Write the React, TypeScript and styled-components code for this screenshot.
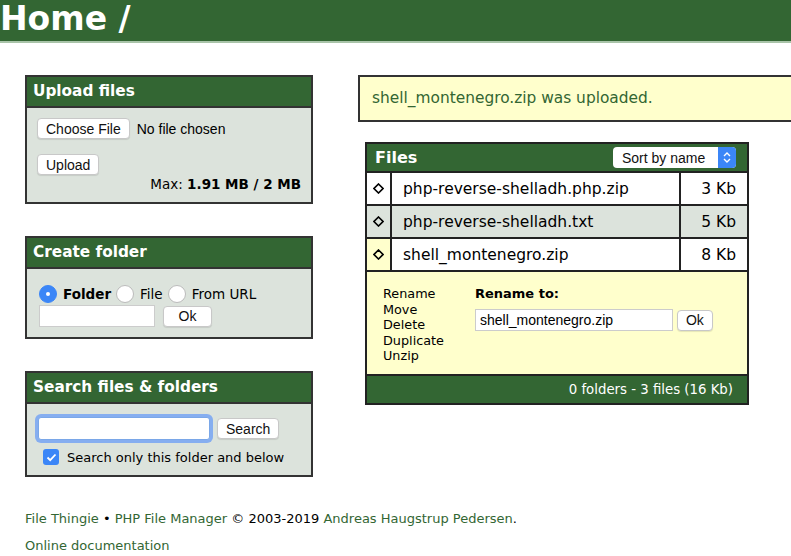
import React from "react";
import styled, { createGlobalStyle } from "styled-components";

const GlobalStyle = createGlobalStyle`
  body {
    margin: 0;
    background: #fff;
    font-family: "DejaVu Sans", Verdana, sans-serif;
    color: #000;
  }
`;

const GREEN = "#336633";
const PALE = "#dce3dc";
const YELLOW = "#ffffcc";
const BORDER = "#333";

const Header = styled.h1`
  margin: 0;
  height: 41px;
  background: ${GREEN};
  border-bottom: 2px solid #a9c4a9;
  color: #fff;
  font-size: 33px;
  font-weight: bold;
  line-height: 38px;
  padding-left: 0;
`;

const Main = styled.div`
  display: flex;
  align-items: flex-start;
  padding: 32px 0 0 25px;
  gap: 45px;
`;

const LeftCol = styled.div`
  display: flex;
  flex-direction: column;
  gap: 32px;
  width: 288px;
  flex-shrink: 0;
`;

const RightCol = styled.div`
  flex: 1;
  margin-right: -20px;
`;

const Box = styled.div`
  border: 2px solid ${BORDER};
  background: ${PALE};
`;

const BoxTitle = styled.h3`
  margin: 0;
  background: ${GREEN};
  color: #fff;
  font-size: 15.3px;
  font-weight: bold;
  padding: 5px 6px 5px;
  line-height: 19px;
  border-bottom: 2px solid ${BORDER};
`;

const BoxBody = styled.div<{ $pad?: string }>`
  padding: ${(p) => p.$pad || "10px 10px 8px"};
  font-size: 13px;
`;

const Btn = styled.button`
  font-family: "Liberation Sans", Arial, sans-serif;
  font-size: 14px;
  background: #fff;
  border: 1px solid #c8c8c8;
  border-radius: 4px;
  padding: 0 8px;
  height: 21px;
  color: #111;
  box-shadow: 0 1px 1px rgba(0, 0, 0, 0.1);
`;

const FileRow = styled.div`
  display: flex;
  align-items: center;
  gap: 7px;
  font-family: "Liberation Sans", Arial, sans-serif;
  font-size: 14px;
`;

const UploadLine = styled.div`
  margin-top: 15px;
`;

const MaxLine = styled.div`
  text-align: right;
  margin-top: 1px;
  font-size: 13.5px;
  b {
    font-weight: bold;
  }
`;

const RadioRow = styled.div`
  display: flex;
  align-items: center;
  font-size: 13.5px;
  margin-top: 4px;
`;

const RadioLabel = styled.span<{ $bold?: boolean }>`
  font-weight: ${(p) => (p.$bold ? "bold" : "normal")};
  margin: 0 5px 0 6px;
`;

const Radio = styled.span<{ $on?: boolean }>`
  display: inline-block;
  width: 18px;
  height: 18px;
  border-radius: 50%;
  box-sizing: border-box;
  background: ${(p) => (p.$on ? "#3b86f7" : "#fff")};
  border: 1px solid ${(p) => (p.$on ? "#3b86f7" : "#bbb")};
  position: relative;
  &::after {
    content: "";
    display: ${(p) => (p.$on ? "block" : "none")};
    position: absolute;
    left: 6px;
    top: 6px;
    width: 4px;
    height: 4px;
    border-radius: 50%;
    background: #fff;
  }
`;

const InputRow = styled.div<{ $gap?: number }>`
  display: flex;
  align-items: center;
  gap: ${(p) => p.$gap ?? 7}px;
  margin-top: 2px;
`;

const TextInput = styled.input<{ $w: number; $focus?: boolean }>`
  width: ${(p) => p.$w}px;
  height: 22px;
  box-sizing: border-box;
  border: 1px solid #ccc;
  padding: 1px 4px;
  font-family: "Liberation Sans", Arial, sans-serif;
  font-size: 14px;
  background: #fff;
  outline: none;
  ${(p) =>
    p.$focus
      ? "height: 23px; border-color: #7aa7e8; box-shadow: 0 0 0 3px #86aef0; border-radius: 3px;"
      : ""}
`;

const CheckRow = styled.div`
  display: flex;
  align-items: center;
  gap: 8px;
  margin: 9px 0 0 5px;
  font-size: 13px;
`;

const Check = styled.span`
  width: 16px;
  height: 16px;
  border-radius: 3px;
  background: #3b86f7;
  display: inline-flex;
  align-items: center;
  justify-content: center;
`;

const Message = styled.div`
  background: ${YELLOW};
  border: 2px solid ${BORDER};
  color: ${GREEN};
  font-size: 15.4px;
  padding: 13px 12px 13px;
  line-height: 17px;
`;

const FilesTable = styled.table`
  margin: 20px 0 0 7px;
  width: 384px;
  border-collapse: collapse;
  border: 2px solid #222;
  font-size: 15.5px;
`;

const HeadCell = styled.th`
  background: ${GREEN};
  color: #fff;
  text-align: left;
  padding: 1px 8px 1px 8px;
  height: 25px;
  border-bottom: 2px solid #222;
`;

const HeadInner = styled.div`
  display: flex;
  justify-content: space-between;
  align-items: center;
  font-size: 16px;
`;

const Select = styled.div`
  display: flex;
  align-items: center;
  background: #fff;
  border-radius: 4px;
  height: 21px;
  width: 123px;
  overflow: hidden;
  font-family: "Liberation Sans", Arial, sans-serif;
  font-weight: normal;
  font-size: 14px;
  color: #111;
  margin-right: 3px;
`;

const SelectText = styled.span`
  flex: 1;
  padding-left: 9px;
`;

const SelectStep = styled.span`
  width: 18px;
  height: 21px;
  background: #3b86f7;
  display: flex;
  align-items: center;
  justify-content: center;
`;

const Row = styled.tr<{ $alt?: boolean }>`
  background: ${(p) => (p.$alt ? PALE : "#fff")};
`;

const Cell = styled.td<{ $sel?: boolean; $right?: boolean }>`
  border: 2px solid #222;
  height: 31px;
  padding: 0 11px;
  text-align: ${(p) => (p.$right ? "right" : "left")};
  background: ${(p) => (p.$sel ? YELLOW : "transparent")};
  &:first-child {
    width: 23px;
    padding: 0;
    text-align: center;
  }
`;

const ActionCell = styled.td`
  background: ${YELLOW};
  border: 2px solid #222;
  padding: 14px 16px 10px;
  height: 76px;
  vertical-align: top;
`;

const ActionWrap = styled.div`
  display: flex;
  gap: 31px;
`;

const ActionList = styled.ul`
  list-style: none;
  margin: 0;
  padding: 0;
  font-size: 12.8px;
  line-height: 15.5px;
`;

const RenameForm = styled.div`
  display: flex;
  flex-direction: column;
  gap: 6px;
  font-size: 13px;
  b {
    font-weight: bold;
  }
`;

const FootCell = styled.td`
  background: ${GREEN};
  color: #fff;
  text-align: right;
  font-size: 13.3px;
  padding: 6px 14px 6px;
  border: 2px solid #222;
`;

const Footer = styled.div`
  margin: 28px 0 0 25px;
  font-size: 13px;
  line-height: 27px;
  a {
    color: ${GREEN};
    text-decoration: none;
  }
`;

const Diamond = () => (
  <svg width="11" height="11" viewBox="0 0 11 11">
    <path d="M5.5 1 L10 5.5 L5.5 10 L1 5.5 Z" fill="none" stroke="#000" strokeWidth="1.6" />
  </svg>
);

const files = [
  { name: "php-reverse-shelladh.php.zip", size: "3 Kb" },
  { name: "php-reverse-shelladh.txt", size: "5 Kb" },
  { name: "shell_montenegro.zip", size: "8 Kb" },
];

export default function App() {
  return (
    <>
      <GlobalStyle />
      <Header>Home /</Header>
      <Main>
        <LeftCol>
          <Box>
            <BoxTitle>Upload files</BoxTitle>
            <BoxBody $pad="10px 10px 10px 10px">
              <FileRow>
                <Btn>Choose File</Btn>
                <span>No file chosen</span>
              </FileRow>
              <UploadLine>
                <Btn>Upload</Btn>
              </UploadLine>
              <MaxLine>
                Max: <b>1.91 MB / 2 MB</b>
              </MaxLine>
            </BoxBody>
          </Box>

          <Box>
            <BoxTitle>Create folder</BoxTitle>
            <BoxBody $pad="12px 10px 10px 12px">
              <RadioRow>
                <Radio $on />
                <RadioLabel $bold>Folder</RadioLabel>
                <Radio />
                <RadioLabel>File</RadioLabel>
                <Radio />
                <RadioLabel>From URL</RadioLabel>
              </RadioRow>
              <InputRow $gap={8}>
                <TextInput $w={116} />
                <Btn style={{ width: 49 }}>Ok</Btn>
              </InputRow>
            </BoxBody>
          </Box>

          <Box>
            <BoxTitle>Search files &amp; folders</BoxTitle>
            <BoxBody $pad="11px 10px 10px 11px">
              <InputRow>
                <TextInput $w={172} $focus />
                <Btn>Search</Btn>
              </InputRow>
              <CheckRow>
                <Check>
                  <svg width="11" height="9" viewBox="0 0 11 9">
                    <path d="M1.5 4.5 L4.2 7.2 L9.5 1.5" fill="none" stroke="#fff" strokeWidth="1.8" />
                  </svg>
                </Check>
                <span>Search only this folder and below</span>
              </CheckRow>
            </BoxBody>
          </Box>
        </LeftCol>

        <RightCol>
          <Message>shell_montenegro.zip was uploaded.</Message>
          <FilesTable>
            <thead>
              <tr>
                <HeadCell colSpan={3}>
                  <HeadInner>
                    <span>Files</span>
                    <Select>
                      <SelectText>Sort by name</SelectText>
                      <SelectStep>
                        <svg width="8" height="13" viewBox="0 0 8 13">
                          <path d="M1 5 L4 2 L7 5 M1 8 L4 11 L7 8" fill="none" stroke="#fff" strokeWidth="1.4" />
                        </svg>
                      </SelectStep>
                    </Select>
                  </HeadInner>
                </HeadCell>
              </tr>
            </thead>
            <tbody>
              {files.map((f, i) => (
                <Row key={f.name} $alt={i === 1}>
                  <Cell $sel={i === 2}>
                    <Diamond />
                  </Cell>
                  <Cell>{f.name}</Cell>
                  <Cell $right style={{ width: 44 }}>
                    {f.size}
                  </Cell>
                </Row>
              ))}
              <tr>
                <ActionCell colSpan={3}>
                  <ActionWrap>
                    <ActionList>
                      <li>Rename</li>
                      <li>Move</li>
                      <li>Delete</li>
                      <li>Duplicate</li>
                      <li>Unzip</li>
                    </ActionList>
                    <RenameForm>
                      <b>Rename to:</b>
                      <InputRow $gap={4}>
                        <TextInput $w={198} defaultValue="shell_montenegro.zip" />
                        <Btn>Ok</Btn>
                      </InputRow>
                    </RenameForm>
                  </ActionWrap>
                </ActionCell>
              </tr>
              <tr>
                <FootCell colSpan={3}>0 folders - 3 files (16 Kb)</FootCell>
              </tr>
            </tbody>
          </FilesTable>
        </RightCol>
      </Main>
      <Footer>
        <div>
          <a href="#">File Thingie</a> • <a href="#">PHP File Manager</a> © 2003-2019{" "}
          <a href="#">Andreas Haugstrup Pedersen</a>.
        </div>
        <div>
          <a href="#">Online documentation</a>
        </div>
      </Footer>
    </>
  );
}
